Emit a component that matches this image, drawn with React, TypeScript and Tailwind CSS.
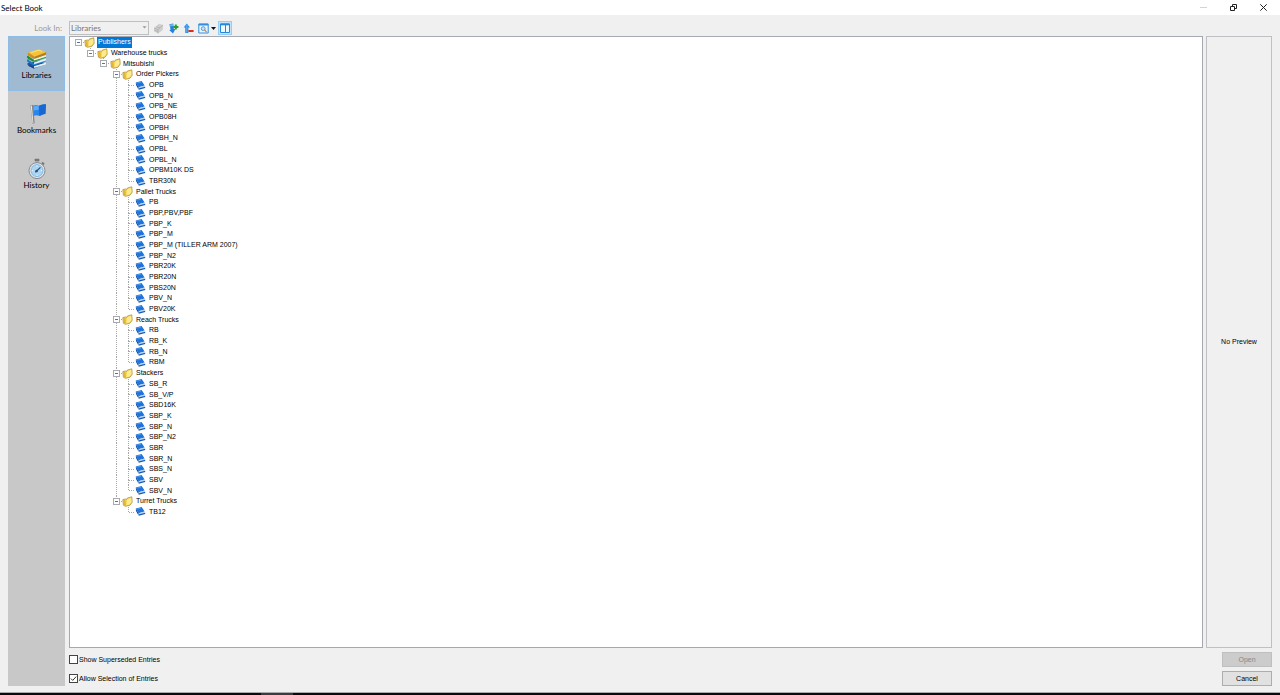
import React from 'react';

type TreeNode = {
  label: string;
  children?: TreeNode[];
};

type Row = {
  label: string;
  depth: number;
  isFolder: boolean;
  isLast: boolean;
  // one entry per ancestor level, true when its line continues past this row
  guides: boolean[];
};

const books = (...labels: string[]): TreeNode[] => labels.map((label) => ({ label }));

const library: TreeNode[] = [
  {
    label: 'Publishers',
    children: [
      {
        label: 'Warehouse trucks',
        children: [
          {
            label: 'Mitsubishi',
            children: [
              {
                label: 'Order Pickers',
                children: books('OPB', 'OPB_N', 'OPB_NE', 'OPB08H', 'OPBH', 'OPBH_N', 'OPBL', 'OPBL_N', 'OPBM10K DS', 'TBR30N'),
              },
              {
                label: 'Pallet Trucks',
                children: books('PB', 'PBP,PBV,PBF', 'PBP_K', 'PBP_M', 'PBP_M (TILLER ARM 2007)', 'PBP_N2', 'PBR20K', 'PBR20N', 'PBS20N', 'PBV_N', 'PBV20K'),
              },
              { label: 'Reach Trucks', children: books('RB', 'RB_K', 'RB_N', 'RBM') },
              {
                label: 'Stackers',
                children: books('SB_R', 'SB_V/P', 'SBD16K', 'SBP_K', 'SBP_N', 'SBP_N2', 'SBR', 'SBR_N', 'SBS_N', 'SBV', 'SBV_N'),
              },
              { label: 'Turret Trucks', children: books('TB12') },
            ],
          },
        ],
      },
    ],
  },
];

const flatten = (nodes: TreeNode[], depth = 0, guides: boolean[] = []): Row[] =>
  nodes.flatMap((node, i) => {
    const isLast = i === nodes.length - 1;
    const row = { label: node.label, depth, isFolder: !!node.children, isLast, guides };
    return [row, ...flatten(node.children ?? [], depth + 1, [...guides, !isLast])];
  });

const rows = flatten(library);

const cellWidths = ['w-[12px]', 'w-[13px]', 'w-[13px]', 'w-[12px]', 'w-[13px]', 'w-[13px]'];

const FolderIcon = () => (
  <svg width="11" height="11" viewBox="0 0 11 11" className="shrink-0">
    <path d="M.8 3.6 3.4 3 4.6 3.4 5.4 2 9.8.8 10.2 6.2 8 9.2 3.6 10.3 1.4 9.2Z" fill="#f6d65c" stroke="#a8872f" strokeWidth=".7" />
    <path d="M1.2 4.2 3.4 3.8 4 9.8 1.8 8.8Z" fill="#e2b534" />
    <path d="M5.4 3.2 9.2 1.8 9.4 5.8 7.6 8.2 4.6 9.2Z" fill="#fdeb8e" />
  </svg>
);

const BookIcon = () => (
  <svg width="11" height="11" viewBox="0 0 11 11" className="shrink-0">
    <path d="M.8 2.4 6.6 1 9.6 5.4 3.6 7.2Z" fill="#1c74dc" />
    <path d="M.8 2.4 3.6 7.2 3.4 9.2 1 5Z" fill="#0d4ba4" />
    <path d="M3.6 7.2 9.6 5.4 9.8 7.2 3.8 9Z" fill="#b9d4f0" />
    <path d="M3.4 8.6 10.2 6.8V8L3.8 9.7Z" fill="#1459b4" />
    <path d="M2.4 3 6 2.1" stroke="#5ba4f2" strokeWidth=".8" />
  </svg>
);

const Connector = ({ row }: { row: Row }) => (
  <svg width="13" height="11" viewBox="0 0 13 11" className="shrink-0" shapeRendering="crispEdges">
    <g stroke="#a8a8a8" strokeDasharray="1 1">
      {row.depth > 0 && <path d="M6.5 0V5" />}
      {!row.isLast && <path d="M6.5 5V11" />}
      <path d="M7 5.5H13" />
    </g>
    {row.isFolder && (
      <>
        <rect x="3.5" y="2.5" width="6" height="6" fill="#fff" stroke="#a9a9b0" />
        <path d="M5 5.5H8" stroke="#5870b0" />
      </>
    )}
  </svg>
);

const Guide = () => (
  <svg width="13" height="11" viewBox="0 0 13 11" className="shrink-0" shapeRendering="crispEdges">
    <path d="M6.5 0V11" stroke="#a8a8a8" strokeDasharray="1 1" />
  </svg>
);

const TreeRow = ({ row, selected }: { row: Row; selected: boolean }) => (
  <li role="treeitem" aria-level={row.depth + 1} aria-selected={selected} className="flex min-h-0 flex-1 items-center">
    {row.guides.map((on, i) => (
      <span key={i} className={`flex h-full shrink-0 overflow-hidden ${cellWidths[i]}`}>
        {on && <Guide />}
      </span>
    ))}
    <span className={`flex h-full shrink-0 overflow-hidden ${cellWidths[row.depth]}`}>
      <Connector row={row} />
    </span>
    <span className={`flex h-full shrink-0 items-center ${cellWidths[row.depth + 1]}`}>
      {row.isFolder ? <FolderIcon /> : <BookIcon />}
    </span>
    <span className={`flex h-full items-center px-px whitespace-nowrap ${selected ? 'bg-[#0078d7] text-white' : ''}`}>
      {row.label}
    </span>
  </li>
);

const LibrariesIcon = () => (
  <svg width="22" height="22" viewBox="0 0 22 22">
    <path d="M2 15.2 13.5 12.6 20 16 8.2 20.6 3 18.2Z" fill="#174f9d" />
    <path d="M8 18.2 20 14.4V16.4L8.2 20Z" fill="#e8f0f5" />
    <path d="M2 11.6 8 15.8 20 12V13.2L8 17.6 2.4 14.6Z" fill="#2186cf" />
    <path d="M8 14.4 20 10.6V12.4L8 16.2Z" fill="#e6f2f7" />
    <path d="M1.6 7.8 8 12 20 8.4V9.8L8 13.8 2 10.8Z" fill="#2d9b34" />
    <path d="M8 10.6 20 7V8.8L8 12.4Z" fill="#eaf5dd" />
    <path d="M2 4.4 13 1.2 20.4 4.2 8.6 8.8Z" fill="#f5c335" />
    <path d="M2 4.4 8.6 8.8 8.2 11 1.8 7.2Z" fill="#d38e13" />
    <path d="M8.6 8.8 20.4 4.2 20 6.8 8.2 11Z" fill="#b97c14" />
    <path d="M5 4.6 13 2.2 16 3.4" fill="none" stroke="#fde48a" strokeWidth=".9" />
    <path d="M1.8 8V9.4L7.4 12.8" fill="none" stroke="#1f8a2a" strokeWidth="1.4" />
    <path d="M1.8 11.4V13L7.4 16.4" fill="none" stroke="#1b72bd" strokeWidth="1.4" />
    <path d="M2 15V17L8 20.2" fill="none" stroke="#123f86" strokeWidth=".9" />
  </svg>
);

const BookmarksIcon = () => (
  <svg width="22" height="22" viewBox="0 0 22 22">
    <path d="M4.4 2.6 7.2 1.8 8.6 20.2 6.4 21Z" fill="#858585" />
    <path d="M4.8 2.8 5.8 2.4 7.4 20.4 6.6 20.6Z" fill="#ececec" />
    <path d="M7.2 2.8C10 1 12 3.4 14 2.4S17.6 1 20 1.4L19.4 11C17 10.8 15.4 12.6 13.6 12.8S10 11.6 7.8 13Z" fill="#2785ee" />
    <path d="M13 2.7C15 2.2 17.6 1 20 1.4L19.4 11C17 10.8 15.4 12.6 13.2 12.7Z" fill="#1868d4" />
    <path d="M7.6 3.6C9.6 2.4 11 3 12.6 3.2L12.7 6.8 7.9 7.4Z" fill="#5aabfa" />
  </svg>
);

const HistoryIcon = () => (
  <svg width="22" height="22" viewBox="0 0 22 22">
    <rect x="8.6" y=".8" width="4.8" height="2.6" rx=".8" fill="#777" />
    <rect x="9.8" y="3" width="2.4" height="2.4" fill="#aaa" />
    <path d="m16 4.6 2 1.8" stroke="#777" strokeWidth="2" />
    <circle cx="11" cy="12.6" r="8" fill="#e2e4e6" stroke="#858b90" strokeWidth="1" />
    <circle cx="11" cy="12.6" r="6" fill="#a9d6f7" stroke="#76a9d0" strokeWidth=".7" />
    <path d="M11 7.4v1.2M11 16.6v1.2M5.8 12.6H7M15 12.6h1.2" stroke="#fff" strokeWidth=".8" />
    <path d="M9.4 14.2 14.4 9.4" stroke="#2c4c70" strokeWidth="1.2" />
    <circle cx="10.6" cy="13" r="1.3" fill="#2c4c70" />
  </svg>
);

const places = [
  { label: 'Libraries', Icon: LibrariesIcon, active: true },
  { label: 'Bookmarks', Icon: BookmarksIcon, active: false },
  { label: 'History', Icon: HistoryIcon, active: false },
];

const Toolbar = () => (
  <div className="flex h-[21px] items-center pt-[5px]">
    <div className="relative flex w-[80px]">
      <select
        id="look-in"
        disabled
        className="h-[14px] w-full appearance-none border border-[#bfbfbf] bg-[#f0f0f0] pl-px font-['Lato',sans-serif] text-[8px] leading-[11px] text-[#777] opacity-100"
      >
        <option>Libraries</option>
      </select>
      <svg width="5" height="3" viewBox="0 0 5 3" className="pointer-events-none absolute top-[5px] right-[2px]">
        <path d="M.5.3H4.5L2.5 2.6Z" fill="#999" />
      </svg>
    </div>
    <button type="button" disabled aria-label="Open book" className="ml-[2px] flex h-[14px] w-[14px] items-center justify-center">
      <svg width="11" height="11" viewBox="0 0 11 11">
        <path d="M1 5 6 .8 10 2 9.8 7 5 10.4 1.2 8.6Z" fill="#cfcfcf" />
        <path d="M1 5 5 6.6 10 2M5 6.6V10.4M3.4 3.6 7 5M1.2 7 5 8.6" fill="none" stroke="#adadad" strokeWidth=".8" />
      </svg>
    </button>
    <button type="button" aria-label="Expand all" className="ml-px flex h-[14px] w-[14px] items-center justify-center">
      <svg width="11" height="11" viewBox="0 0 11 11">
        <path d="M1.4 1.2 5.2.6 5.8 6H7.4L5 10.6 1.4 7.2 2.6 6.6Z" fill="#2381d8" />
        <path d="M1.6 1.4 5 1 5.2 3 2 3.4Z" fill="#6bb5ef" />
        <path d="M7.8 1.4V6.6M5.2 4H10.4" stroke="#24a02c" strokeWidth="2" />
      </svg>
    </button>
    <button type="button" aria-label="Collapse all" className="ml-px flex h-[14px] w-[14px] items-center justify-center">
      <svg width="11" height="11" viewBox="0 0 11 11">
        <path d="M3.8.6 7 4.4H5.4V10H2.2V4.4H.6Z" fill="#2b8fe6" />
        <path d="M3.8 1.8V9.4" stroke="#6ab7f4" strokeWidth=".9" />
        <path d="M5.4 8H10.6" stroke="#d9301c" strokeWidth="2" />
      </svg>
    </button>
    <button type="button" aria-label="Search view" className="ml-px flex h-[14px] w-[14px] items-center justify-center">
      <svg width="11" height="11" viewBox="0 0 11 11">
        <path d="M.8 1H10.2V10H.8Z" fill="#eaf5fd" stroke="#348fdc" />
        <path d="M.8 1.6H10.2" stroke="#348fdc" strokeWidth="1.8" />
        <circle cx="5.2" cy="5.6" r="1.9" fill="#c6e6fb" stroke="#4793cc" strokeWidth=".9" />
        <path d="m6.6 7 1.9 1.9" stroke="#c78635" strokeWidth="1.2" />
      </svg>
    </button>
    <button type="button" aria-label="View options" className="flex h-[14px] w-[7px] items-center justify-center">
      <svg width="5" height="3" viewBox="0 0 5 3">
        <path d="M0 0H5L2.5 3Z" fill="#111" />
      </svg>
    </button>
    <button
      type="button"
      aria-label="Preview pane"
      aria-pressed="true"
      className="ml-px flex h-[14px] w-[14px] items-center justify-center border border-[#99ccf4] bg-[#c6e2f8]"
    >
      <svg width="10" height="10" viewBox="0 0 10 10" className="shrink-0">
        <path d="M.5 1H9.5V9.5H.5Z" fill="#eef8ff" stroke="#2488dd" />
        <path d="M.5 1.4H9.5" stroke="#2488dd" strokeWidth="1.8" />
        <path d="M5.5 1V9" stroke="#2488dd" />
      </svg>
    </button>
  </div>
);

const Option = ({ id, label, checked }: { id: string; label: string; checked?: boolean }) => (
  <div className="flex h-[15px] items-center">
    <span className="grid">
      <input
        id={id}
        type="checkbox"
        defaultChecked={checked}
        className="peer col-start-1 row-start-1 size-[9px] appearance-none border border-[#444] bg-white"
      />
      <svg width="9" height="9" viewBox="0 0 9 9" className="pointer-events-none invisible col-start-1 row-start-1 peer-checked:visible">
        <path d="M2 4.6 3.7 6.4 7.2 2.6" fill="none" stroke="#333" />
      </svg>
    </span>
    <label htmlFor={id} className="pl-px">
      {label}
    </label>
  </div>
);

const TitleBar = () => (
  <header className="flex h-[15px] items-center justify-between bg-white pr-[2px] pl-px">
    <h1 className="font-['Lato',sans-serif] text-[8px] text-black">Select Book</h1>
    <div className="flex">
      <button type="button" disabled aria-label="Minimize" className="flex h-[15px] w-[30px] items-center justify-center">
        <svg width="7" height="7" viewBox="0 0 7 7">
          <path d="M0 3.5H7" stroke="#d4d4d4" />
        </svg>
      </button>
      <button type="button" aria-label="Restore" className="flex h-[15px] w-[30px] items-center justify-center">
        <svg width="7" height="7" viewBox="0 0 7 7" fill="none" stroke="#222">
          <path d="M.5 2.5H4.5V6.5H.5ZM2.5 2V.5H6.5V4.5H5" />
        </svg>
      </button>
      <button type="button" aria-label="Close" className="flex h-[15px] w-[30px] items-center justify-center">
        <svg width="7" height="7" viewBox="0 0 7 7" stroke="#222">
          <path d="M.3.3 6.7 6.7M6.7.3.3 6.7" />
        </svg>
      </button>
    </div>
  </header>
);

const App: React.FC = () => {
  return (
    <div className="flex min-h-screen flex-col bg-[#f0f0f0] font-['Liberation_Sans',Arial,sans-serif] text-[7px] leading-[10px] text-black">
      <TitleBar />

      <main className="flex flex-1 px-[8px] pb-[6px]">
        <div className="mr-[4px] flex w-[57px] shrink-0 flex-col">
          <label htmlFor="look-in" className="flex h-[21px] items-center justify-end pt-[5px] pr-[3px] font-['Lato',sans-serif] text-[8px] text-[#999]">
            Look In:
          </label>
          <nav className="flex flex-1 flex-col bg-[#c8c8c8]">
            {places.map(({ label, Icon, active }) => (
              <button
                key={label}
                type="button"
                className={`flex h-[55px] flex-col items-center justify-center border font-['Lato',sans-serif] text-[8px] ${
                  active ? 'border-[#8ebce4] bg-[#a0bad1]' : 'border-transparent'
                }`}
              >
                <Icon />
                <span>{label}</span>
              </button>
            ))}
          </nav>
        </div>

        <div className="mr-[3px] flex min-w-0 flex-1 flex-col">
          <Toolbar />
          <div className="flex-1 border border-[#a5a8b0] bg-white pl-[2px]">
            <ul role="tree" aria-label="Books" className="flex h-[480px] flex-col">
              {rows.map((row) => (
                <TreeRow key={`${row.depth}-${row.label}`} row={row} selected={row.label === 'Publishers'} />
              ))}
            </ul>
          </div>
          <div className="flex flex-col gap-[4px] pt-[4px]">
            <Option id="superseded" label="Show Superseded Entries" />
            <Option id="selection" label="Allow Selection of Entries" checked />
          </div>
        </div>

        <div className="flex w-[66px] shrink-0 flex-col pt-[21px]">
          <section className="flex flex-1 items-center justify-center border border-[#c0c0c4]">No Preview</section>
          <div className="flex flex-col items-end gap-[4px] pt-[4px]">
            <button type="button" disabled className="h-[15px] w-[50px] border border-[#bfbfbf] bg-[#cccccc] text-[#888]">
              Open
            </button>
            <button type="button" className="h-[15px] w-[50px] border border-[#adadad] bg-[#e1e1e1]">
              Cancel
            </button>
          </div>
        </div>
      </main>

      <footer className="flex h-[3px] border-t border-[#aaa] bg-[#080a10]">
        <div className="ml-[261px] h-full w-[32px] bg-[#3a3c42]" />
      </footer>
    </div>
  );
};

export default App;
